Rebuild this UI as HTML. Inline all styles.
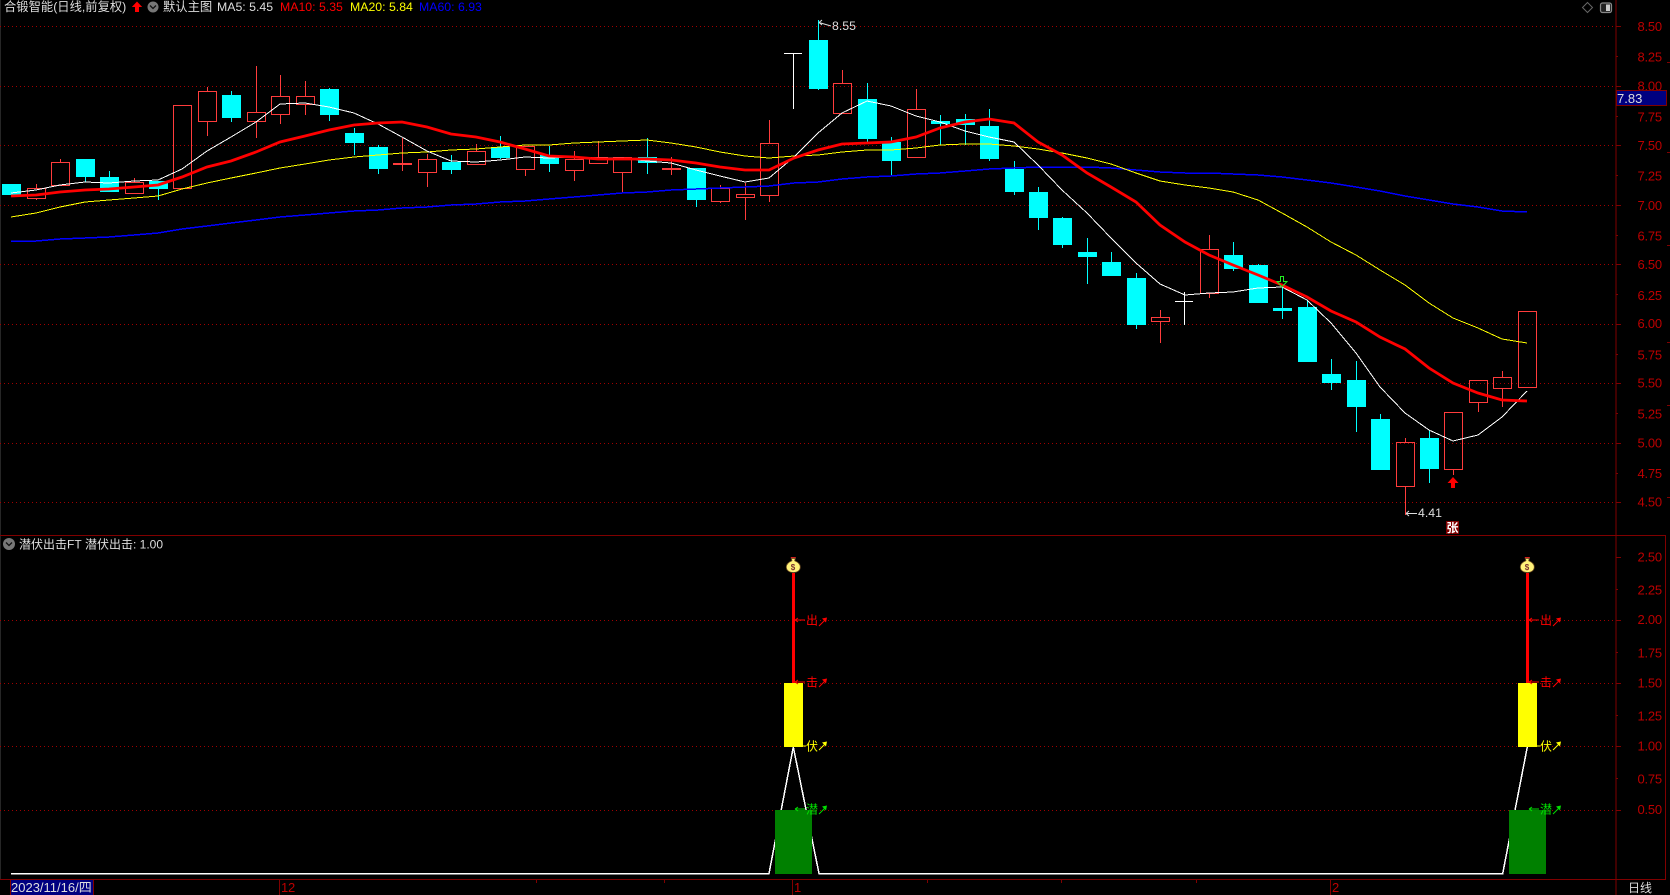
<!DOCTYPE html>
<html lang="zh"><head><meta charset="utf-8"><title>合锻智能</title>
<style>
html,body{margin:0;padding:0;background:#000;width:1670px;height:895px;overflow:hidden}
svg{display:block;position:absolute;left:0;top:0}
text{font-family:"Liberation Sans","Noto Sans CJK SC",sans-serif;font-size:12.3px;fill:#ddd}
.ax text{font-size:13px;fill:#bc0000;letter-spacing:-.25px}
</style></head><body>
<svg width="1670" height="895" viewBox="0 0 1670 895" xmlns="http://www.w3.org/2000/svg">
<rect width="1670" height="895" fill="#000"/>
<path d="M0.5 0V880" stroke="#262626" fill="none"/>
<!-- grid -->
<path shape-rendering="crispEdges" d="M0 26.5H1615M0 86.5H1615M0 145.5H1615M0 205.5H1615M0 264.5H1615M0 324.5H1615M0 383.5H1615M0 443.5H1615M0 502.5H1615M0 620.5H1615M0 683.5H1615M0 746.5H1615M0 810.5H1615" stroke="#a00000" stroke-dasharray="1 3" fill="none"/>
<!-- frame -->
<path shape-rendering="crispEdges" d="M0 535.5H1666M0 879.5H1666M1616 0V895M1665.5 535V880M536.5 880v3M664.5 880v3M792.5 880v15M927.5 880v3M1061.5 880v3M1196.5 880v3M279.5 880v15M1330.5 880v15M10.5 880v15M93.5 880v15" stroke="#800000" fill="none"/>
<path shape-rendering="crispEdges" d="M1616 26.5h5M1616 86.5h5M1616 145.5h5M1616 205.5h5M1616 264.5h5M1616 324.5h5M1616 383.5h5M1616 443.5h5M1616 502.5h5M1616 557.5h5M1616 620.5h5M1616 683.5h5M1616 746.5h5M1616 810.5h5M1616 56.5h2M1616 116.5h2M1616 175.5h2M1616 235.5h2M1616 294.5h2M1616 354.5h2M1616 413.5h2M1616 473.5h2M1616 589.5h2M1616 652.5h2M1616 715.5h2M1616 778.5h2M1667 62.5h3M1667 152.5h3M1667 245.5h3M1667 342.5h3M1667 405.5h3M1667 497.5h3" stroke="#800000" fill="none"/>
<!-- candles: red -->
<path shape-rendering="crispEdges" fill="none" stroke="#ff3c3c" d="M27.5 188.5h18v10h-18zM36.5 184V188M36.5 199V200M51.5 162.5h18v23h-18zM60.5 159V162M125.5 182.5h18v11h-18zM134.5 178V182M173.5 105.5h18v83h-18zM198.5 91.5h18v30h-18zM207.5 87V91M207.5 122V136M247.5 112.5h18v9h-18zM256.5 66V112M256.5 122V138M271.5 96.5h18v18h-18zM280.5 75V96M280.5 115V124M296.5 96.5h18v8h-18zM305.5 81V96M305.5 105V115M393.5 163.5h18v1h-18zM402.5 138V171M418.5 159.5h18v13h-18zM427.5 154V159M427.5 173V187M467.5 151.5h18v13h-18zM476.5 144V151M516.5 146.5h18v23h-18zM525.5 170V176M565.5 159.5h18v11h-18zM574.5 151V159M574.5 171V181M589.5 157.5h18v6h-18zM598.5 141V157M613.5 157.5h18v15h-18zM622.5 173V192M662.5 168.5h18v1h-18zM671.5 157V175M711.5 188.5h18v13h-18zM720.5 185V188M720.5 202V203M736.5 194.5h18v3h-18zM745.5 183V194M745.5 198V220M760.5 143.5h18v52h-18zM769.5 120V143M769.5 196V202M833.5 83.5h18v30h-18zM842.5 70V83M907.5 109.5h18v48h-18zM916.5 89V109M1151.5 317.5h18v4h-18zM1160.5 310V317M1160.5 322V343M1200.5 249.5h18v44h-18zM1209.5 235V249M1209.5 294V298M1396.5 442.5h18v44h-18zM1405.5 438V442M1405.5 487V515M1444.5 412.5h18v57h-18zM1453.5 470V475M1469.5 380.5h18v22h-18zM1478.5 403V412M1493.5 377.5h18v11h-18zM1502.5 371V377M1502.5 389V407M1518.5 311.5h18v76h-18z"/>
<!-- candles: cyan wicks -->
<path shape-rendering="crispEdges" fill="none" stroke="#00ffff" d="M85.5 177V182M109.5 171V177M158.5 189V200M231.5 91V122M329.5 88V121M354.5 128V155M378.5 145V174M451.5 155V174M500.5 136V159M549.5 146V172M647.5 138V174M696.5 168V207M818.5 20V90M867.5 83V142M891.5 137V175M940.5 115V145M965.5 114V145M989.5 109V161M1014.5 161V195M1038.5 187V230M1062.5 217V248M1087.5 238V284M1111.5 252V276M1136.5 273V329M1233.5 242V271M1258.5 264V303M1282.5 285V319M1307.5 300V307M1331.5 359V390M1356.5 361V432M1380.5 414V419M1429.5 430V483"/>
<!-- candles: cyan bodies -->
<path shape-rendering="crispEdges" fill="#00ffff" d="M2 184h19v11H2zM76 159h19v18H76zM100 177h19v15h-19zM149 181h19v8h-19zM222 95h19v23h-19zM320 89h19v26h-19zM345 133h19v10h-19zM369 147h19v22h-19zM442 162h19v8h-19zM491 147h19v11h-19zM540 155h19v9h-19zM638 157h19v6h-19zM687 168h19v32h-19zM809 40h19v49h-19zM858 99h19v40h-19zM882 142h19v19h-19zM931 121h19v3h-19zM956 119h19v6h-19zM980 126h19v33h-19zM1005 169h19v23h-19zM1029 192h19v26h-19zM1053 218h19v27h-19zM1078 252h19v5h-19zM1102 262h19v14h-19zM1127 278h19v47h-19zM1224 255h19v14h-19zM1249 265h19v38h-19zM1273 308h19v3h-19zM1298 307h19v55h-19zM1322 374h19v9h-19zM1347 380h19v27h-19zM1371 419h19v51h-19zM1420 438h19v31h-19z"/>
<!-- white doji -->
<path shape-rendering="crispEdges" fill="none" stroke="#fff" d="M784 53.5h18M793.5 53V109M1175 301.5h18M1184.5 292V325"/>
<!-- MA lines -->
<polyline shape-rendering="crispEdges" fill="none" stroke="#0000ff" stroke-width="1.5" points="11,241 36,241 60,239 85,238 109,237 134,235 158,233 182,229 207,226 231,223 256,220 280,217 305,215 329,213 354,211 378,210 402,208 427,207 451,205 476,204 500,202 525,201 549,199 574,197 598,195 622,193 647,192 671,190 696,189 720,188 745,187 769,186 794,183 818,182 842,179 867,177 891,176 916,174 940,173 965,171 989,169 1014,168 1038,167 1062,167 1087,167 1111,168 1136,170 1160,172 1185,173 1209,173 1233,174 1258,175 1282,177 1307,180 1331,183 1356,187 1380,191 1405,196 1429,200 1453,204 1478,207 1502,211 1527,212"/>
<polyline shape-rendering="crispEdges" fill="none" stroke="#ffff00" stroke-width="1" points="11,217 36,213 60,207 85,202 109,200 134,198 158,196 182,189 207,183 231,178 256,173 280,168 305,164 329,160 354,157 378,155 402,153 427,152 451,150 476,149 500,147 525,145 549,145 574,143 598,142 622,141 647,140 671,143 696,147 720,152 745,156 769,158 794,156 818,155 842,152 867,150 891,150 916,148 940,145 965,144 989,144 1014,146 1038,149 1062,153 1087,158 1111,164 1136,173 1160,181 1185,185 1209,188 1233,192 1258,200 1282,213 1307,227 1331,242 1356,255 1380,270 1405,285 1429,303 1453,318 1478,328 1502,339 1527,343"/>
<polyline shape-rendering="crispEdges" fill="none" stroke="#ffffff" stroke-width="1" points="11,193 36,190 60,185 85,182 109,183 134,181 158,180 182,169 207,151 231,137 256,122 280,104 305,103 329,107 354,113 378,124 402,137 427,151 451,161 476,162 500,160 525,157 549,158 574,157 598,158 622,158 647,161 671,163 696,170 720,176 745,182 769,178 794,157 818,133 842,113 867,101 891,106 916,116 940,122 965,131 989,137 1014,142 1038,165 1062,190 1087,213 1111,238 1136,263 1160,284 1185,295 1209,293 1233,292 1258,288 1282,287 1307,300 1331,323 1356,353 1380,387 1405,413 1429,430 1453,441 1478,435 1502,417 1527,391"/>
<polyline fill="none" stroke="#ff0000" stroke-width="2.8" points="11,196 36,195 60,192 85,190 109,189 134,187 158,185 182,177 207,167 231,161 256,152 280,142 305,136 329,130 354,125 378,123 402,122 427,127 451,134 476,137 500,142 525,149 549,156 574,157 598,159 622,159 647,159 671,160 696,163 720,167 745,170 769,170 794,158 818,150 842,144 867,143 891,142 916,137 940,128 965,122 989,119 1014,123 1038,142 1062,155 1087,173 1111,187 1136,202 1160,225 1185,242 1209,255 1233,265 1258,275 1282,285 1307,297 1331,311 1356,322 1380,337 1405,349 1429,368 1453,383 1478,393 1502,400 1527,401"/>
<!-- high / low marks -->
<path d="M819 22.5l12 3.5M819 22.5l3-2.5M819 22.5l3 2.5" stroke="#ddd" fill="none"/>
<text x="832" y="30">8.55</text>
<path d="M1406 513.5h11M1406 513.5l3-2.5M1406 513.5l3 2.5" stroke="#ddd" fill="none"/>
<text x="1418" y="517">4.41</text>
<!-- green hollow arrow -->
<path d="M1280.5 276.5h3v5h3.5l-5 5.5-5-5.5h3.500z" fill="none" stroke="#22ee22"/>
<!-- red up arrow -->
<path d="M1453 477l5.500 6h-3.500v5h-4v-5h-3.500z" fill="#ff0000"/>
<!-- zhang -->
<rect x="1446" y="521" width="13" height="13" fill="#800000"/>
<text x="1446.500" y="532" style="font-size:12px;fill:#fff;font-weight:bold">张</text>
<!-- lower panel -->
<polyline shape-rendering="crispEdges" fill="none" stroke="#fff" stroke-width="1.500" points="11,873.500 769,873.500 793.300,747 819,873.500 1502.700,873.500 1527.300,747"/>
<g shape-rendering="crispEdges">
<rect x="775" y="810" width="37" height="64" fill="#008000"/>
<rect x="784" y="683" width="19" height="64" fill="#ffff00"/>
<rect x="792" y="573" width="3" height="110" fill="#ff0000"/>
</g>
<g shape-rendering="crispEdges">
<rect x="1509" y="810" width="37" height="64" fill="#008000"/>
<rect x="1518" y="683" width="19" height="64" fill="#ffff00"/>
<rect x="1526" y="573" width="3" height="110" fill="#ff0000"/>
</g>
<!-- signal labels 1 -->
<g>
<path d="M795 620h10M795 620l3-2M795 620l3 2M795 682h10M795 682l3-2M795 682l3 2" stroke="#ff0000" fill="none"/>
<path d="M803 746h3" stroke="#ffff00" fill="none"/>
<path d="M795 809h10M795 809l3-2M795 809l3 2" stroke="#00dd00" fill="none"/>
<text x="806" y="624.500" style="fill:#ff0000;font-size:12px">出</text>
<text x="806" y="686.500" style="fill:#ff0000;font-size:12px">击</text>
<text x="806" y="750.500" style="fill:#ffff00;font-size:12px">伏</text>
<text x="806" y="813.500" style="fill:#00dd00;font-size:12px">潜</text>
<path d="M819 626l6-6" stroke="#ff0000" fill="none"/><path d="M827 617.500l-5 1 4 4z" fill="#ff0000"/>
<path d="M819 687l6-6" stroke="#ff0000" fill="none"/><path d="M827 678.500l-5 1 4 4z" fill="#ff0000"/>
<path d="M819 750l6-6" stroke="#ffff00" fill="none"/><path d="M827 741.500l-5 1 4 4z" fill="#ffff00"/>
<path d="M819 814l6-6" stroke="#00dd00" fill="none"/><path d="M827 805.500l-5 1 4 4z" fill="#00dd00"/>
</g>
<!-- signal labels 2 -->
<g transform="translate(734 0)">
<path d="M795 620h10M795 620l3-2M795 620l3 2M795 682h10M795 682l3-2M795 682l3 2" stroke="#ff0000" fill="none"/>
<path d="M803 746h3" stroke="#ffff00" fill="none"/>
<path d="M795 809h10M795 809l3-2M795 809l3 2" stroke="#00dd00" fill="none"/>
<text x="806" y="624.500" style="fill:#ff0000;font-size:12px">出</text>
<text x="806" y="686.500" style="fill:#ff0000;font-size:12px">击</text>
<text x="806" y="750.500" style="fill:#ffff00;font-size:12px">伏</text>
<text x="806" y="813.500" style="fill:#00dd00;font-size:12px">潜</text>
<path d="M819 626l6-6" stroke="#ff0000" fill="none"/><path d="M827 617.500l-5 1 4 4z" fill="#ff0000"/>
<path d="M819 687l6-6" stroke="#ff0000" fill="none"/><path d="M827 678.500l-5 1 4 4z" fill="#ff0000"/>
<path d="M819 750l6-6" stroke="#ffff00" fill="none"/><path d="M827 741.500l-5 1 4 4z" fill="#ffff00"/>
<path d="M819 814l6-6" stroke="#00dd00" fill="none"/><path d="M827 805.500l-5 1 4 4z" fill="#00dd00"/>
</g>
<!-- money bags -->
<g transform="translate(793.300 565)">
<rect x="-2.500" y="-8" width="5" height="1.500" fill="#d02020"/>
<path d="M-2 -6.500h4l-.6 2.200c3.600 1.500 5.600 4 5.600 6.300 0 3-2.500 5.500-7 5.500s-7-2.500-7-5.500c0-2.300 2-4.800 5.600-6.300z" fill="#fff27a" stroke="#6b4a20" stroke-width=".8"/>
<text x="-2.500" y="5" style="font-size:8px;fill:#7a3030;font-weight:bold">$</text>
</g>
<g transform="translate(1527.300 565)">
<rect x="-2.500" y="-8" width="5" height="1.500" fill="#d02020"/>
<path d="M-2 -6.500h4l-.6 2.200c3.600 1.500 5.600 4 5.600 6.300 0 3-2.500 5.500-7 5.500s-7-2.500-7-5.500c0-2.300 2-4.800 5.600-6.300z" fill="#fff27a" stroke="#6b4a20" stroke-width=".8"/>
<text x="-2.500" y="5" style="font-size:8px;fill:#7a3030;font-weight:bold">$</text>
</g>
<!-- header -->
<text x="4" y="11">合锻智能(日线,前复权)</text>
<path d="M137 1.500l5.200 5.500h-3.200v5h-4v-5h-3.200z" fill="#ff0000"/>
<circle cx="153" cy="7" r="5.500" fill="#777"/>
<path d="M150 5.500l3 3 3-3" stroke="#111" stroke-width="1.300" fill="none"/>
<text x="163" y="11">默认主图</text>
<text x="217" y="11">MA5: 5.45</text>
<text x="280" y="11" style="fill:#ff0000">MA10: 5.35</text>
<text x="350" y="11" style="fill:#ffff00">MA20: 5.84</text>
<text x="419" y="11" style="fill:#0000ff">MA60: 6.93</text>
<path d="M1587.500 2.500l5 5-5 5-5-5z" fill="none" stroke="#666"/>
<rect x="1600.500" y="3" width="11" height="9.500" rx="2" fill="#222" stroke="#888" stroke-width="1.200"/>
<rect x="1606" y="4.500" width="4" height="6.500" fill="#ccc"/>
<!-- lower title -->
<circle cx="9" cy="544" r="6" fill="#777"/>
<path d="M6 542.500l3 3 3-3" stroke="#111" stroke-width="1.300" fill="none"/>
<text x="19" y="548.500" style="font-size:12px">潜伏出击FT</text>
<text x="85" y="548.500" style="font-size:12px">潜伏出击: 1.00</text>
<!-- axis labels -->
<g class="ax">
<text x="1637.500" y="31">8.50</text><text x="1637.500" y="61.500">8.25</text><text x="1637.500" y="90.500">8.00</text><text x="1637.500" y="121.500">7.75</text><text x="1637.500" y="150">7.50</text><text x="1637.500" y="180.500">7.25</text><text x="1637.500" y="210">7.00</text><text x="1637.500" y="240.500">6.75</text><text x="1637.500" y="269">6.50</text><text x="1637.500" y="300">6.25</text><text x="1637.500" y="328">6.00</text><text x="1637.500" y="359.500">5.75</text><text x="1637.500" y="387.500">5.50</text><text x="1637.500" y="418.500">5.25</text><text x="1637.500" y="447.500">5.00</text><text x="1637.500" y="478">4.75</text><text x="1637.500" y="506.500">4.50</text>
<text x="1637.500" y="561.500">2.50</text><text x="1637.500" y="594.500">2.25</text><text x="1637.500" y="624">2.00</text><text x="1637.500" y="657.500">1.75</text><text x="1637.500" y="687.500">1.50</text><text x="1637.500" y="720.500">1.25</text><text x="1637.500" y="750.500">1.00</text><text x="1637.500" y="783.500">0.75</text><text x="1637.500" y="814">0.50</text>
</g>
<!-- current price box -->
<rect x="1616.500" y="90.500" width="50" height="15" fill="#000080" stroke="#800000"/>
<text x="1617" y="103" style="font-size:13px">7.83</text>
<!-- bottom axis -->
<rect x="10.500" y="880" width="83" height="15" fill="#000080"/>
<path d="M10.500 880v15M93.500 880v15" stroke="#800000"/>
<text x="11" y="892" style="font-size:13px">2023/11/16/四</text>
<g class="ax">
<text x="281" y="892">12</text><text x="794" y="892">1</text><text x="1332" y="892">2</text>
</g>
<text x="1628" y="892" style="font-size:12px">日线</text>
</svg>
</body></html>
